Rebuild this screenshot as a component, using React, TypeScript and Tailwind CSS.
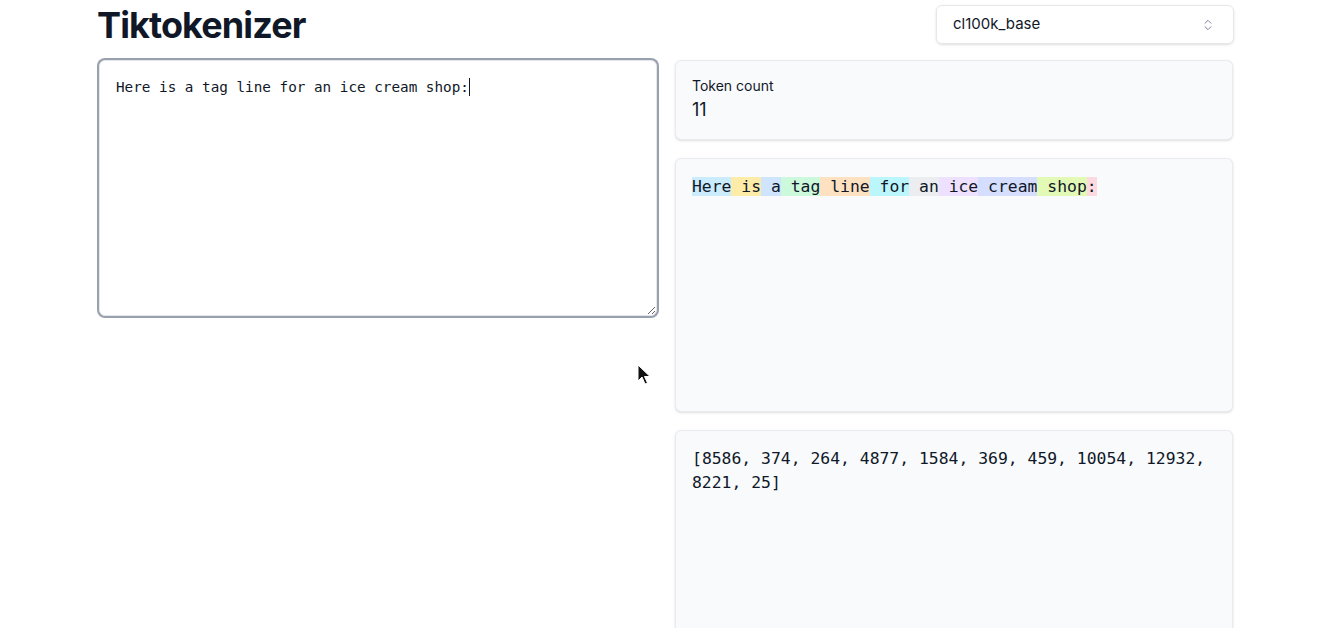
import { ChevronsUpDown } from 'lucide-react';

const TEXT = 'Here is a tag line for an ice cream shop:';

const TOKENS: { text: string; color: string }[] = [
  { text: 'Here', color: 'bg-sky-200/70' },
  { text: ' is', color: 'bg-amber-200/70' },
  { text: ' a', color: 'bg-blue-200/70' },
  { text: ' tag', color: 'bg-green-200/70' },
  { text: ' line', color: 'bg-orange-200/70' },
  { text: ' for', color: 'bg-cyan-200/70' },
  { text: ' an', color: 'bg-gray-200/70' },
  { text: ' ice', color: 'bg-purple-200/70' },
  { text: ' cream', color: 'bg-indigo-200/70' },
  { text: ' shop', color: 'bg-lime-200/70' },
  { text: ':', color: 'bg-rose-200/70' },
];

const IDS = [8586, 374, 264, 4877, 1584, 369, 459, 10054, 12932, 8221, 25];

const mono = { fontFamily: '"DejaVu Sans Mono", "Liberation Mono", monospace' };

export default function App() {
  return (
    <div className="relative min-h-screen bg-white text-gray-900 overflow-hidden" style={{ fontFamily: 'Inter, "Liberation Sans", sans-serif' }}>
      <div className="mx-auto w-[1136px] flex flex-col">
        {/* header */}
        <div className="flex items-center justify-between pt-[5px] h-[59px] pb-[15px]">
          <h1 className="text-[36px] leading-none font-bold tracking-[-0.025em] -ml-px">Tiktokenizer</h1>
          <div className="w-[298px] h-[39px] border border-gray-200 rounded-md shadow-sm flex items-center justify-between pl-4 pr-[18px]">
            <span className="text-[15px]">cl100k_base</span>
            <ChevronsUpDown size={14} strokeWidth={1.5} className="text-gray-500" />
          </div>
        </div>

        <div className="grid grid-cols-[558px_558px] gap-[18px] pl-px">
          <div className="relative pt-px">
            <textarea
              readOnly
              defaultValue={TEXT}
              className="block w-full h-[256px] rounded-md border border-gray-200 ring-2 ring-gray-400 outline-none px-4 py-4 text-[14.3px] leading-5 text-gray-900 bg-white"
              style={mono}
            />
            {/* text caret */}
            <span className="absolute left-[370px] top-[19px] w-px h-[18px] bg-gray-900" />
          </div>

          <div className="flex flex-col gap-[18px] pt-px">
            <div className="bg-slate-50 border border-gray-200/80 rounded-md shadow-sm px-4 py-[15px]">
              <div className="text-sm leading-5">Token count</div>
              <div className="text-lg leading-7">11</div>
            </div>

            <div className="bg-slate-50 border border-gray-200/80 rounded-md shadow-sm p-4 h-[254px]">
              <pre className="text-[16.4px] leading-6 whitespace-pre-wrap" style={mono}>
                {TOKENS.map((t, i) => (
                  <span key={i} className={t.color}>{t.text}</span>
                ))}
              </pre>
            </div>

            <div className="bg-slate-50 border border-gray-200/80 rounded-md shadow-sm p-4 h-[253px]">
              <pre className="text-[16.4px] leading-6 whitespace-pre-wrap" style={mono}>
                [{IDS.join(', ')}]
              </pre>
            </div>
          </div>
        </div>
      </div>

      {/* mouse pointer */}
      <svg className="absolute left-[637px] top-[364px]" width="14" height="22" viewBox="0 0 14 22">
        <path d="M1 1 L1 17 L5 13 L8 20 L10.5 19 L7.5 12.5 L13 12.5 Z" fill="#111" stroke="#fff" strokeWidth="1" strokeLinejoin="round" />
      </svg>
    </div>
  );
}
